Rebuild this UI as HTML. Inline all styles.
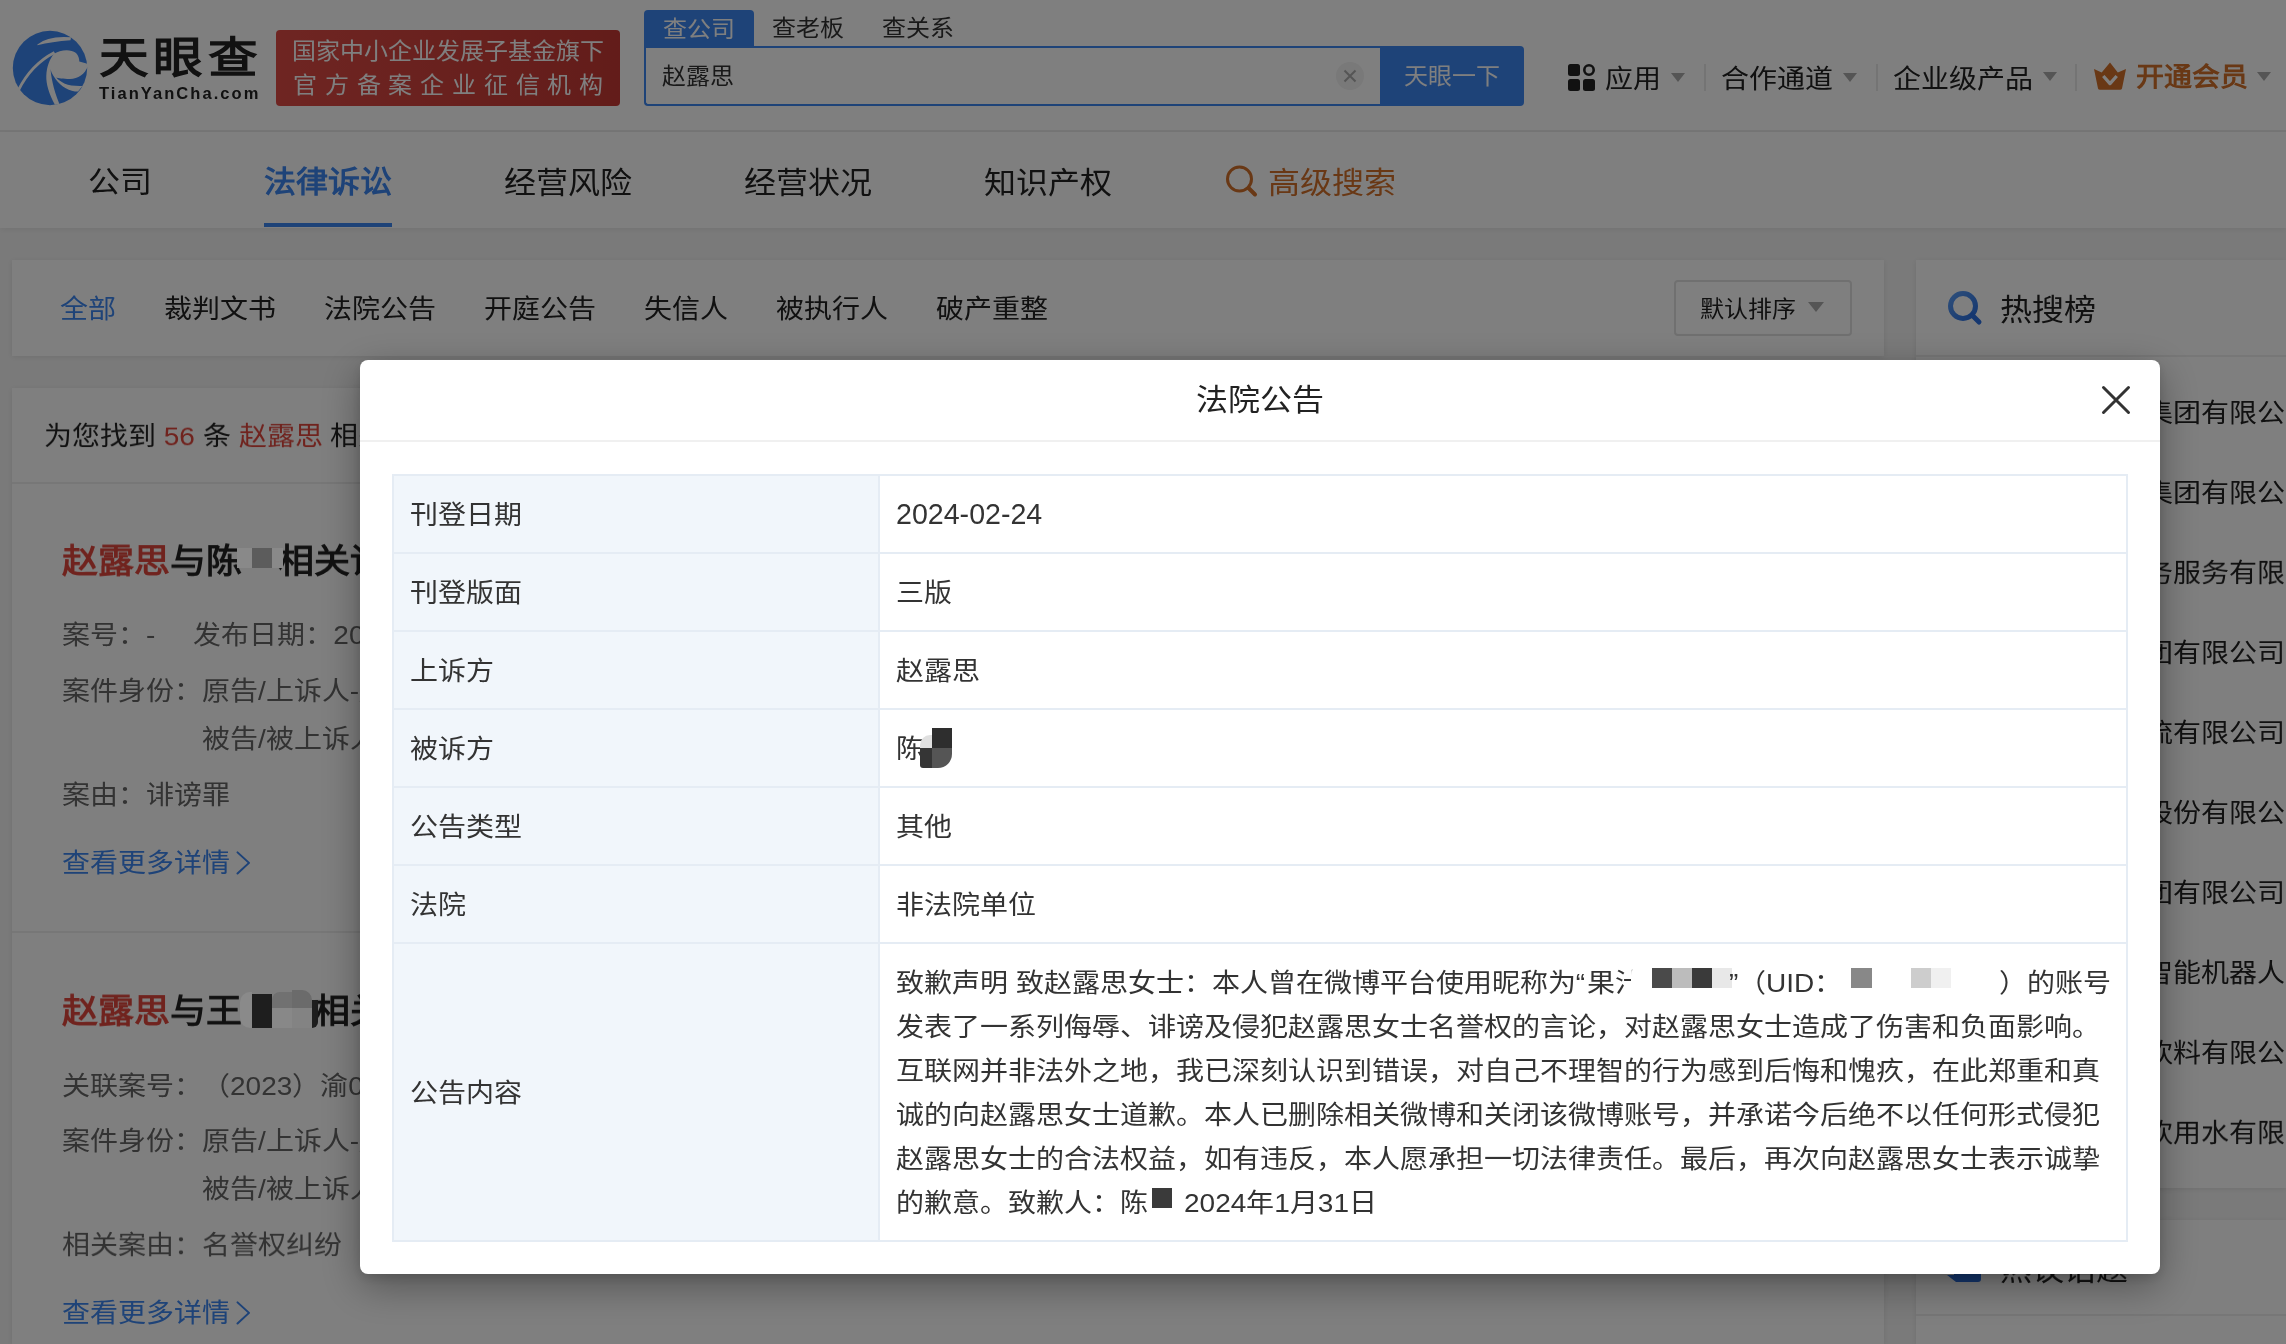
<!DOCTYPE html>
<html lang="zh-CN">
<head>
<meta charset="utf-8">
<style>
*{box-sizing:border-box;margin:0;padding:0}
html,body{width:2286px;height:1344px;overflow:hidden}
body{position:relative;background:#f5f5f5;font-family:"Liberation Sans",sans-serif;color:#333;-webkit-font-smoothing:antialiased}
#root{position:absolute;left:0;top:0;width:2286px;height:1344px;will-change:transform}
.a{position:absolute;white-space:nowrap}
.t{transform:scaleY(.93);transform-origin:50% calc(50% - 2px)}
.tri{position:absolute;width:0;height:0;border-left:7px solid transparent;border-right:7px solid transparent;border-top:9px solid #aaa}
.sep{position:absolute;width:2px;height:27px;background:#e8e8e8;top:64px}
</style>
</head>
<body><div id="root">
<div class="a" style="left:0px;top:0px;width:2286px;height:130px;background:#fff;"></div>
<div class="a" style="left:0px;top:130px;width:2286px;height:2px;background:#ececec;"></div>
<svg class="a" style="left:8px;top:26px" width="84" height="84" viewBox="0 0 84 84">
<circle cx="42" cy="42" r="37.2" fill="#3d86f0"/>
<path fill="#fff" d="M29.4,18.4 Q40,9.4 63,11.2 L62.5,14.2 Q44,15.6 29.4,19.2 Z"/>
<path fill="none" stroke="#fff" stroke-width="2.8" d="M10.5,64 C18,49 30,35 46.5,26.5"/>
<path fill="#fff" d="M45.6,28 C52,24 62,22.5 68,27 C70.5,29.5 71.3,33 71.3,35.6 L78.5,37.5 L80,40 C77,48 70,53 62,53 C55,53 50,52.5 48,51.3 C53,57 60,60.5 74.4,60 L70,65.6 C62,65.6 53,61 47.5,53 C44,48 42.5,44.5 42.5,42.5 C43,50 45,62 51.3,77.8 L46.9,78.8 C41,68 38,58 38.3,50 C38.6,40 42,33 45.6,28 Z"/>
</svg>
<div class="a t" id="logotxt" style="left:99px;top:28px;font-size:43px;line-height:60px;color:#222;font-weight:700;letter-spacing:4px;transform:scaleX(1.155);transform-origin:0 0">天眼查</div>
<div class="a t" id="logoen" style="left:99px;top:84px;font-size:16.5px;line-height:18px;color:#222;font-weight:700;letter-spacing:2.05px;transform:none">TianYanCha.com</div>
<div class="a" style="left:276px;top:30px;width:344px;height:76px;background:linear-gradient(90deg,#de4b45,#c63934);border-radius:4px"></div>
<div class="a t" id="bd1" style="left:292px;top:36px;font-size:24px;line-height:32px;color:#fff;">国家中小企业发展子基金旗下</div>
<div class="a t" id="bd2" style="left:293px;top:70px;font-size:24px;line-height:32px;color:#fff;letter-spacing:7.8px">官方备案企业征信机构</div>
<div class="a" style="left:644px;top:10px;width:110px;height:38px;background:#3d86f0;border-radius:4px 4px 0 0"></div>
<div class="a t" id="tab1" style="left:663px;top:14px;font-size:24px;line-height:32px;color:#fff;">查公司</div>
<div class="a t" id="tab2" style="left:772px;top:13px;font-size:24px;line-height:32px;color:#333;">查老板</div>
<div class="a t" id="tab3" style="left:882px;top:13px;font-size:24px;line-height:32px;color:#333;">查关系</div>
<div class="a" style="left:644px;top:46px;width:740px;height:60px;border:2px solid #3d86f0;border-right:none;border-radius:0 0 0 4px;background:#fff"></div>
<div class="a t" id="q" style="left:662px;top:61px;font-size:24px;line-height:32px;color:#333;">赵露思</div>
<div class="a" style="left:1336px;top:62px;width:28px;height:28px;border-radius:50%;background:#f2f2f2"></div>
<svg class="a" style="left:1343px;top:69px" width="14" height="14" viewBox="0 0 14 14"><path d="M1.5,1.5 L12.5,12.5 M12.5,1.5 L1.5,12.5" stroke="#aaa" stroke-width="2"/></svg>
<div class="a" style="left:1380px;top:46px;width:144px;height:60px;background:#3d86f0;border-radius:0 4px 4px 0"></div>
<div class="a t" id="btn" style="left:1404px;top:61px;font-size:24px;line-height:32px;color:#fff;">天眼一下</div>
<svg class="a" style="left:1568px;top:64px" width="27" height="27" viewBox="0 0 27 27">
<rect x="0" y="0" width="12" height="12" rx="2.5" fill="#222"/>
<circle cx="21" cy="6" r="4.7" fill="none" stroke="#222" stroke-width="2.6"/>
<rect x="0" y="15" width="12" height="12" rx="2.5" fill="#222"/>
<rect x="15" y="15" width="12" height="12" rx="2.5" fill="#222"/>
</svg>
<div class="a t" id="n1" style="left:1605px;top:60px;font-size:28px;line-height:40px;color:#222;">应用</div>
<div class="tri" style="left:1671px;top:73px"></div>
<div class="sep" style="left:1704px"></div>
<div class="a t" id="n2" style="left:1721px;top:60px;font-size:28px;line-height:40px;color:#222;">合作通道</div>
<div class="tri" style="left:1843px;top:73px"></div>
<div class="sep" style="left:1876px"></div>
<div class="a t" id="n3" style="left:1893px;top:60px;font-size:28px;line-height:40px;color:#222;">企业级产品</div>
<div class="tri" style="left:2043px;top:72px"></div>
<div class="sep" style="left:2075px"></div>
<svg class="a" style="left:2094px;top:62px" width="32" height="28" viewBox="0 0 32 28">
<path fill="#d2702a" d="M0,7 L7.7,10.5 L16,0.5 L23.8,10.5 L32,7 L28,26.5 Q27.6,27.8 26,27.8 L6,27.8 Q4.4,27.8 4,26.5 Z"/>
<path fill="none" stroke="#fff" stroke-width="3.3" stroke-linejoin="round" d="M9.3,14 L16,21.6 L22.7,14"/>
</svg>
<div class="a t" id="n4" style="left:2136px;top:58px;font-size:28px;line-height:40px;color:#d2702a;font-weight:700">开通会员</div>
<div class="tri" style="left:2257px;top:72px"></div>
<div class="a" style="left:0px;top:132px;width:2286px;height:96px;background:#fff;box-shadow:0 2px 6px rgba(0,0,0,.06)"></div>
<div class="a t" id="v1" style="left:88px;top:159px;font-size:32px;line-height:46px;color:#222;">公司</div>
<div class="a t" id="v2" style="left:264px;top:159px;font-size:32px;line-height:46px;color:#3d86f0;font-weight:700">法律诉讼</div>
<div class="a" style="left:264px;top:223px;width:128px;height:4px;background:#3d86f0;"></div>
<div class="a t" id="v3" style="left:504px;top:160px;font-size:32px;line-height:46px;color:#222;">经营风险</div>
<div class="a t" id="v4" style="left:744px;top:160px;font-size:32px;line-height:46px;color:#222;">经营状况</div>
<div class="a t" id="v5" style="left:984px;top:160px;font-size:32px;line-height:46px;color:#222;">知识产权</div>
<svg class="a" style="left:1224px;top:164px" width="36" height="36" viewBox="0 0 36 36"><circle cx="15.5" cy="15" r="12" fill="none" stroke="#d2702a" stroke-width="3"/><path d="M24.5,24 L31,30.5" stroke="#d2702a" stroke-width="4" stroke-linecap="round"/></svg>
<div class="a t" id="v6" style="left:1268px;top:160px;font-size:32px;line-height:46px;color:#d2702a;">高级搜索</div>
<div class="a" style="left:12px;top:260px;width:1872px;height:96px;background:#fff;box-shadow:0 1px 6px rgba(0,0,0,.09)"></div>
<div class="a t" style="left:60px;top:290px;font-size:28px;line-height:40px;color:#3d86f0;">全部</div>
<div class="a t" style="left:164px;top:290px;font-size:28px;line-height:40px;color:#222;">裁判文书</div>
<div class="a t" style="left:324px;top:290px;font-size:28px;line-height:40px;color:#222;">法院公告</div>
<div class="a t" style="left:484px;top:290px;font-size:28px;line-height:40px;color:#222;">开庭公告</div>
<div class="a t" style="left:644px;top:290px;font-size:28px;line-height:40px;color:#222;">失信人</div>
<div class="a t" style="left:776px;top:290px;font-size:28px;line-height:40px;color:#222;">被执行人</div>
<div class="a t" style="left:936px;top:290px;font-size:28px;line-height:40px;color:#222;">破产重整</div>
<div class="a" style="left:1674px;top:280px;width:178px;height:56px;border:2px solid #e0e0e0;border-radius:4px"></div>
<div class="a t" id="sort" style="left:1700px;top:294px;font-size:24px;line-height:32px;color:#222;">默认排序</div>
<div class="a" style="left:1808px;top:302px;width:0;height:0;border-left:8px solid transparent;border-right:8px solid transparent;border-top:10px solid #aaa"></div>
<div class="a" style="left:1916px;top:260px;width:370px;height:928px;background:#fff;box-shadow:0 1px 6px rgba(0,0,0,.09)"></div>
<div class="a" style="left:1916px;top:355px;width:370px;height:2px;background:#eee;"></div>
<svg class="a" style="left:1944px;top:287px" width="42" height="42" viewBox="0 0 42 42"><defs><linearGradient id="sg" x1="0" y1="0" x2="1" y2="1"><stop offset="0" stop-color="#5a9cf5"/><stop offset="1" stop-color="#2a6fe0"/></linearGradient></defs><circle cx="19" cy="19" r="12.5" fill="none" stroke="url(#sg)" stroke-width="5"/><path d="M28,28 L35,35" stroke="#2a6fe0" stroke-width="5" stroke-linecap="round"/></svg>
<div class="a t" id="hot" style="left:2000px;top:287px;font-size:32px;line-height:46px;color:#222;">热搜榜</div>
<div class="a t" style="left:2145px;top:394px;font-size:28px;line-height:40px;color:#222;">集团有限公司</div>
<div class="a t" style="left:2145px;top:474px;font-size:28px;line-height:40px;color:#222;">集团有限公司</div>
<div class="a t" style="left:2145px;top:554px;font-size:28px;line-height:40px;color:#222;">务服务有限公司</div>
<div class="a t" style="left:2145px;top:634px;font-size:28px;line-height:40px;color:#222;">团有限公司</div>
<div class="a t" style="left:2145px;top:714px;font-size:28px;line-height:40px;color:#222;">流有限公司</div>
<div class="a t" style="left:2145px;top:794px;font-size:28px;line-height:40px;color:#222;">股份有限公司</div>
<div class="a t" style="left:2145px;top:874px;font-size:28px;line-height:40px;color:#222;">团有限公司</div>
<div class="a t" style="left:2145px;top:954px;font-size:28px;line-height:40px;color:#222;">智能机器人</div>
<div class="a t" style="left:2145px;top:1034px;font-size:28px;line-height:40px;color:#222;">饮料有限公司</div>
<div class="a t" style="left:2145px;top:1114px;font-size:28px;line-height:40px;color:#222;">饮用水有限公司</div>
<div class="a" style="left:1916px;top:1220px;width:370px;height:124px;background:#fff;box-shadow:0 1px 6px rgba(0,0,0,.09)"></div>
<div class="a" style="left:1916px;top:1314px;width:370px;height:2px;background:#eee;"></div>
<svg class="a" style="left:1946px;top:1248px" width="36" height="36" viewBox="0 0 36 36"><path d="M8,2 H32 Q35,2 35,5 V31 Q35,34 32,34 H10 L1,27 L8,27 Z" fill="#2a6fe0"/></svg>
<div class="a t" id="hot2" style="left:2000px;top:1247px;font-size:32px;line-height:46px;color:#222;">热议话题</div>
<div class="a" style="left:12px;top:388px;width:1872px;height:956px;background:#fff;box-shadow:0 1px 6px rgba(0,0,0,.09)"></div>
<div class="a t" id="r0" style="left:44px;top:417px;font-size:28px;line-height:40px;color:#222;">为您找到 <span style="color:#e0463c">56</span> 条 <span style="color:#e0463c">赵露思</span> 相关诉讼</div>
<div class="a" style="left:12px;top:482px;width:1872px;height:2px;background:#eee;"></div>
<div class="a t" id="t1" style="left:62px;top:537px;font-size:36px;line-height:50px;color:#222;font-weight:700"><span style="color:#e0463c">赵露思</span>与陈<span style="display:inline-block;width:36px"></span>相关诉讼</div>
<div class="a t" id="l1" style="left:62px;top:614px;font-size:28px;line-height:44px;color:#666;">案号：-<span style="display:inline-block;width:38px"></span>发布日期：2024-02-24</div>
<div class="a t" id="l2" style="left:62px;top:668px;font-size:28px;line-height:48px;color:#666;">案件身份：原告/上诉人-赵露思</div>
<div class="a t" id="l3" style="left:202px;top:716px;font-size:28px;line-height:48px;color:#666;">被告/被上诉人-陈某</div>
<div class="a t" id="l4" style="left:62px;top:772px;font-size:28px;line-height:48px;color:#666;">案由：诽谤罪</div>
<div class="a t" id="l5" style="left:62px;top:840px;font-size:28px;line-height:48px;color:#3d86f0;">查看更多详情<svg style="vertical-align:-3px;margin-left:4px" width="18" height="26" viewBox="0 0 18 26"><path d="M3.5,1.6 L15,13 L3.5,24.4" fill="none" stroke="#3d86f0" stroke-width="2" stroke-linecap="round" stroke-linejoin="round"/></svg></div>
<div class="a" style="left:12px;top:931px;width:1872px;height:2px;background:#eee;"></div>
<div class="a t" id="t2" style="left:62px;top:987px;font-size:36px;line-height:50px;color:#222;font-weight:700"><span style="color:#e0463c">赵露思</span>与王<span style="display:inline-block;width:72px"></span>相关诉讼</div>
<div class="a t" id="m1" style="left:62px;top:1063px;font-size:28px;line-height:48px;color:#666;">关联案号：<span style="margin-left:14px">（2023）渝0112刑初</span></div>
<div class="a t" id="m2" style="left:62px;top:1118px;font-size:28px;line-height:48px;color:#666;">案件身份：原告/上诉人-赵露思</div>
<div class="a t" id="m3" style="left:202px;top:1166px;font-size:28px;line-height:48px;color:#666;">被告/被上诉人-王某</div>
<div class="a t" id="m4" style="left:62px;top:1222px;font-size:28px;line-height:48px;color:#666;">相关案由：名誉权纠纷</div>
<div class="a t" id="m5" style="left:62px;top:1290px;font-size:28px;line-height:48px;color:#3d86f0;">查看更多详情<svg style="vertical-align:-3px;margin-left:4px" width="18" height="26" viewBox="0 0 18 26"><path d="M3.5,1.6 L15,13 L3.5,24.4" fill="none" stroke="#3d86f0" stroke-width="2" stroke-linecap="round" stroke-linejoin="round"/></svg></div>
<div class="a" style="left:0px;top:0px;width:2286px;height:1344px;background:rgba(0,0,0,.5);"></div>
<div class="a" style="left:237px;top:548px;width:46px;height:20px;background:#898989;"></div>
<div class="a" style="left:252px;top:548px;width:20px;height:20px;background:#5c5c5c;"></div>
<div class="a" style="left:240px;top:992px;width:12px;height:36px;background:#8a8a8a;border-radius:10px 0 0 10px"></div>
<div class="a" style="left:252px;top:994px;width:20px;height:34px;background:#1e1e1e;"></div>
<div class="a" style="left:272px;top:992px;width:20px;height:16px;background:#717171;border-radius:8px 0 0 0"></div>
<div class="a" style="left:272px;top:1008px;width:20px;height:20px;background:#888;"></div>
<div class="a" style="left:292px;top:990px;width:20px;height:18px;background:#6b6b6b;border-radius:0 10px 0 0"></div>
<div class="a" style="left:292px;top:1008px;width:20px;height:20px;background:#838383;"></div>
<div class="a" style="left:312px;top:1000px;width:6px;height:28px;background:#1e1e1e;border-radius:0 0 6px 0"></div>
<div class="a" style="left:360px;top:360px;width:1800px;height:914px;background:#fff;border-radius:8px;box-shadow:0 4px 12px rgba(0,0,0,.12),0 12px 40px rgba(0,0,0,.35)"></div>
<div class="a t" id="mt" style="left:360px;top:377px;font-size:32px;line-height:46px;color:#222;width:1800px;text-align:center">法院公告</div>
<svg class="a" style="left:2100px;top:384px" width="32" height="32" viewBox="0 0 32 32"><path d="M3.5,3.5 L28.5,28.5 M28.5,3.5 L3.5,28.5" stroke="#333" stroke-width="3" stroke-linecap="round"/></svg>
<div class="a" style="left:360px;top:440px;width:1800px;height:2px;background:#f0f0f0;"></div>
<div class="a" style="left:392px;top:474px;width:1736px;height:768px;border:2px solid #e5ecf4"></div>
<div class="a" style="left:394px;top:476px;width:484px;height:764px;background:#f1f6fb;"></div>
<div class="a" style="left:878px;top:476px;width:2px;height:764px;background:#e5ecf4;"></div>
<div class="a" style="left:394px;top:552px;width:1732px;height:2px;background:#e5ecf4;"></div>
<div class="a" style="left:394px;top:630px;width:1732px;height:2px;background:#e5ecf4;"></div>
<div class="a" style="left:394px;top:708px;width:1732px;height:2px;background:#e5ecf4;"></div>
<div class="a" style="left:394px;top:786px;width:1732px;height:2px;background:#e5ecf4;"></div>
<div class="a" style="left:394px;top:864px;width:1732px;height:2px;background:#e5ecf4;"></div>
<div class="a" style="left:394px;top:942px;width:1732px;height:2px;background:#e5ecf4;"></div>
<div class="a t" style="left:410px;top:494px;font-size:28px;line-height:44px;color:#333;">刊登日期</div>
<div class="a t" style="left:896px;top:494px;font-size:28px;line-height:44px;color:#333;transform:none;font-size:28.6px;margin-top:-2px">2024-02-24</div>
<div class="a t" style="left:410px;top:572px;font-size:28px;line-height:44px;color:#333;">刊登版面</div>
<div class="a t" style="left:896px;top:572px;font-size:28px;line-height:44px;color:#333;">三版</div>
<div class="a t" style="left:410px;top:650px;font-size:28px;line-height:44px;color:#333;">上诉方</div>
<div class="a t" style="left:896px;top:650px;font-size:28px;line-height:44px;color:#333;">赵露思</div>
<div class="a t" style="left:410px;top:728px;font-size:28px;line-height:44px;color:#333;">被诉方</div>
<div class="a t" style="left:896px;top:728px;font-size:28px;line-height:44px;color:#333;">陈</div>
<div class="a t" style="left:410px;top:806px;font-size:28px;line-height:44px;color:#333;">公告类型</div>
<div class="a t" style="left:896px;top:806px;font-size:28px;line-height:44px;color:#333;">其他</div>
<div class="a t" style="left:410px;top:884px;font-size:28px;line-height:44px;color:#333;">法院</div>
<div class="a t" style="left:896px;top:884px;font-size:28px;line-height:44px;color:#333;">非法院单位</div>
<div class="a t" style="left:410px;top:1072px;font-size:28px;line-height:44px;color:#333;">公告内容</div>
<div class="a t" style="left:896px;top:1006px;font-size:28px;line-height:44px;color:#333;">发表了一系列侮辱、诽谤及侵犯赵露思女士名誉权的言论，对赵露思女士造成了伤害和负面影响。</div>
<div class="a t" style="left:896px;top:1050px;font-size:28px;line-height:44px;color:#333;">互联网并非法外之地，我已深刻认识到错误，对自己不理智的行为感到后悔和愧疚，在此郑重和真</div>
<div class="a t" style="left:896px;top:1094px;font-size:28px;line-height:44px;color:#333;">诚的向赵露思女士道歉。本人已删除相关微博和关闭该微博账号，并承诺今后绝不以任何形式侵犯</div>
<div class="a t" style="left:896px;top:1138px;font-size:28px;line-height:44px;color:#333;">赵露思女士的合法权益，如有违反，本人愿承担一切法律责任。最后，再次向赵露思女士表示诚挚</div>
<div class="a t" id="c1" style="left:896px;top:962px;font-size:28px;line-height:44px;color:#333;">致歉声明 致赵露思女士：本人曾在微博平台使用昵称为<span style="letter-spacing:2px">“</span>果汁</div>
<div class="a" style="left:1631px;top:962px;width:112px;height:46px;background:#fff;border-radius:14px 0 0 14px"></div>
<div class="a" style="left:1652px;top:968px;width:20px;height:20px;background:#4a4a4a;"></div>
<div class="a" style="left:1672px;top:968px;width:20px;height:20px;background:#bcbcbc;"></div>
<div class="a" style="left:1692px;top:968px;width:20px;height:20px;background:#3a3a3a;"></div>
<div class="a" style="left:1712px;top:968px;width:20px;height:20px;background:#e8e8e8;"></div>
<div class="a t" id="c1b" style="left:1729px;top:962px;font-size:28px;line-height:44px;color:#333;">”</div>
<div class="a t" id="c1c" style="left:1738px;top:962px;font-size:28px;line-height:44px;color:#333;">（UID：</div>
<div class="a" style="left:1839px;top:962px;width:160px;height:46px;background:#fff;border-radius:14px"></div>
<div class="a" style="left:1851px;top:968px;width:21px;height:20px;background:#888;"></div>
<div class="a" style="left:1911px;top:968px;width:20px;height:20px;background:#cdcdcd;"></div>
<div class="a" style="left:1931px;top:968px;width:20px;height:20px;background:#f0f0f0;"></div>
<div class="a t" id="c1d" style="left:1999px;top:962px;font-size:28px;line-height:44px;color:#333;">）的账号</div>
<div class="a t" id="c6" style="left:896px;top:1182px;font-size:28px;line-height:44px;color:#333;">的歉意。致歉人：陈</div>
<div class="a" style="left:1152px;top:1188px;width:20px;height:20px;background:#3a3a3a;"></div>
<div class="a t" id="c6b" style="left:1184px;top:1182px;font-size:28px;line-height:44px;color:#333;">2024年1月31日</div>
<div class="a" style="left:920px;top:735px;width:12px;height:13px;background:#e0e0e0;border-radius:10px 0 0 0"></div>
<div class="a" style="left:932px;top:728px;width:20px;height:20px;background:#2e2e2e;"></div>
<div class="a" style="left:920px;top:748px;width:12px;height:20px;background:#353535;border-radius:0 0 0 3px"></div>
<div class="a" style="left:932px;top:748px;width:20px;height:20px;background:#555;border-radius:0 0 14px 0"></div>
</div></body>
</html>
